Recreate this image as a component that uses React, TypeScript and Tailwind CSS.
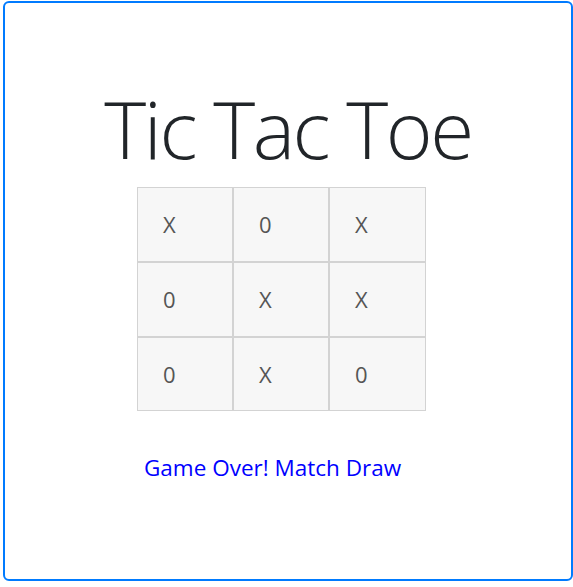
const board = ["X", "0", "X", "0", "X", "X", "0", "X", "0"];

export default function App() {
  return (
    <div className="bg-white w-[573px] h-[587px] pt-px pl-[3px]" style={{ fontFamily: '"Open Sans", "Noto Sans", sans-serif' }}>
      <div className="w-[570px] h-[580px] border-2 border-[#007bff] rounded-md flex flex-col">
        <h1 className="text-center text-[80px] leading-none font-light text-[#212529] mt-[85px] tracking-[-2.5px]">Tic Tac Toe</h1>
        <div className="grid grid-cols-[96px_96px_97px] grid-rows-[75px_75px_74px] ml-[132px] mt-[19px] w-fit">
          {board.map((v, i) => (
            <div key={i} className="border border-[#d3d3d3] bg-[#f7f7f7] flex items-center pl-[25px] text-[22px] text-[#555]">
              {v}
            </div>
          ))}
        </div>
        <p className="ml-[139px] mt-[40px] text-[22.5px] text-[#0000ff]">Game Over! Match Draw</p>
      </div>
    </div>
  );
}
